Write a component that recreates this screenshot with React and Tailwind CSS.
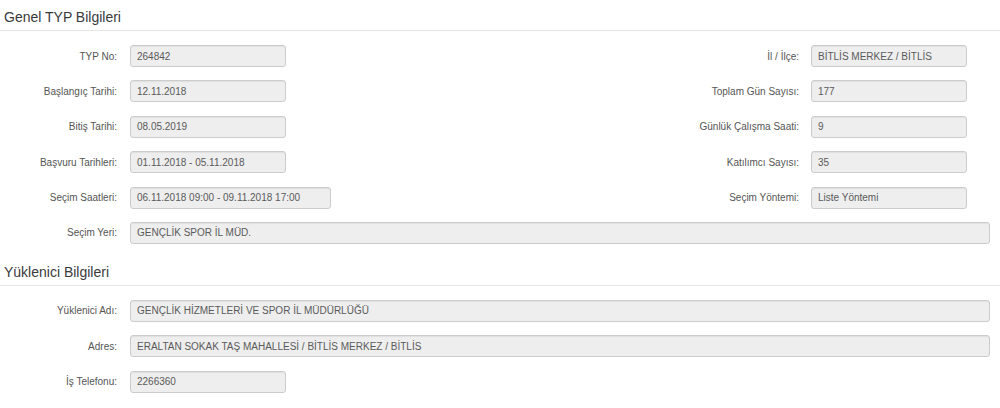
import React from "react";

const font = { fontFamily: '"Liberation Sans", Arial, sans-serif' };

function Field({ value, className = "" }) {
  return (
    <div
      className={`h-[22px] flex items-center px-[6px] bg-[#eeeeee] border border-[#cccccc] rounded-[3px] shadow-[inset_0_1px_1px_rgba(0,0,0,0.06)] text-[10px] leading-[15px] text-[#5a5a5a] whitespace-nowrap overflow-hidden ${className}`}
    >
      {value}
    </div>
  );
}

function Label({ children, className = "" }) {
  return (
    <div className={`text-right text-[10px] leading-[15px] text-[#555555] whitespace-nowrap ${className}`}>
      {children}
    </div>
  );
}

function TwoRow({ l1, v1, l2, v2, w1 = "w-[156px]" }) {
  return (
    <div className="flex items-center h-[22px]">
      <Label className="w-[113px] shrink-0">{l1}</Label>
      <Field value={v1} className={`ml-[13px] shrink-0 ${w1}`} />
      <Label className="flex-1">{l2}</Label>
      <Field value={v2} className="ml-[12px] w-[156px] shrink-0 mr-[33px]" />
    </div>
  );
}

function FullRow({ l, v, w }) {
  return (
    <div className="flex items-center h-[22px]">
      <Label className="w-[113px] shrink-0">{l}</Label>
      <Field value={v} className={`ml-[13px] ${w ? w + " shrink-0" : "flex-1 mr-[10px]"}`} />
    </div>
  );
}

function Heading({ children, className = "" }) {
  return (
    <div
      className={`h-[31px] pt-[7px] leading-[20px] text-[14px] text-[#3a3a3a] border-b border-[#e5e5e5] pl-[4px] ${className}`}
    >
      {children}
    </div>
  );
}

export default function App() {
  return (
    <div className="w-[1000px] h-[408px] bg-white overflow-hidden" style={font}>
      <Heading>Genel TYP Bilgileri</Heading>
      <div className="pl-[4px] mt-[14px] flex flex-col gap-[13.4px]">
        <TwoRow l1="TYP No:" v1="264842" l2="İl / İlçe:" v2="BİTLİS MERKEZ / BİTLİS" />
        <TwoRow l1="Başlangıç Tarihi:" v1="12.11.2018" l2="Toplam Gün Sayısı:" v2="177" />
        <TwoRow l1="Bitiş Tarihi:" v1="08.05.2019" l2="Günlük Çalışma Saati:" v2="9" />
        <TwoRow l1="Başvuru Tarihleri:" v1="01.11.2018 - 05.11.2018" l2="Katılımcı Sayısı:" v2="35" />
        <TwoRow
          l1="Seçim Saatleri:"
          v1="06.11.2018 09:00 - 09.11.2018 17:00"
          w1="w-[201px]"
          l2="Seçim Yöntemi:"
          v2="Liste Yöntemi"
        />
        <FullRow l="Seçim Yeri:" v="GENÇLİK SPOR İL MÜD." />
      </div>
      <Heading className="mt-[11px]">Yüklenici Bilgileri</Heading>
      <div className="pl-[4px] mt-[14px] flex flex-col gap-[13.5px]">
        <FullRow l="Yüklenici Adı:" v="GENÇLİK HİZMETLERİ VE SPOR İL MÜDÜRLÜĞÜ" />
        <FullRow l="Adres:" v="ERALTAN SOKAK TAŞ MAHALLESİ / BİTLİS MERKEZ / BİTLİS" />
        <FullRow l="İş Telefonu:" v="2266360" w="w-[156px]" />
      </div>
    </div>
  );
}
